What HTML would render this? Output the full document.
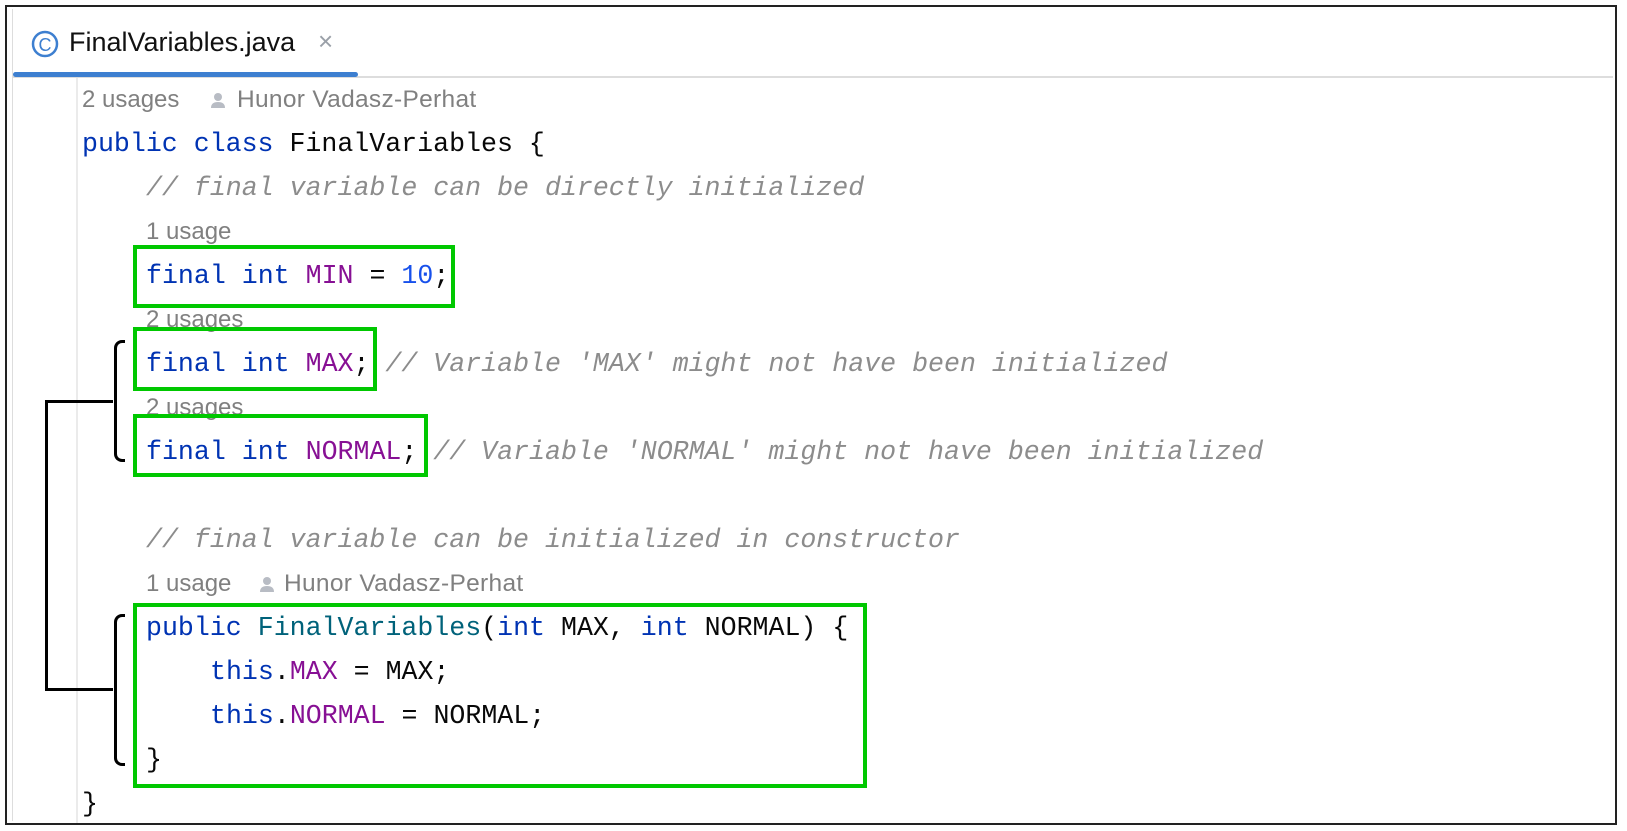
<!DOCTYPE html>
<html><head><meta charset="utf-8"><style>
body{margin:0;width:1627px;height:831px;background:#fff;position:relative;overflow:hidden;font-family:"Liberation Sans",sans-serif}
.a{position:absolute}
.code{position:absolute;font-family:"Liberation Mono",monospace;font-size:26.6px;white-space:pre;line-height:44px;color:#080808}
.u{position:absolute;font-size:24px;color:#808080;white-space:pre;line-height:44px}
.au{font-size:24.5px;letter-spacing:0.3px}
.k{color:#0033b3}.f{color:#871094}.n{color:#1750eb}.c{color:#8c8c8c;font-style:italic}.t{color:#00627a}
.g{position:absolute;border:4px solid #00c800;box-sizing:border-box}
.br{position:absolute;border:3px solid #000;border-right:none;box-sizing:border-box;border-radius:8px 0 0 8px}
</style></head><body>
<div class="a" style="left:5px;top:5px;width:1612px;height:820px;border:2px solid #222;box-sizing:border-box"></div>
<div class="a" style="left:12px;top:9px;width:1px;height:812px;background:#ddd"></div>
<div class="a" style="left:13px;top:76px;width:1600px;height:2px;background:#ddd"></div>
<div class="a" style="left:13px;top:72px;width:345px;height:5px;background:#3d7fd0;border-radius:3px"></div>
<div class="a" style="left:76px;top:78px;width:2px;height:745px;background:#ebebeb"></div>
<svg class="a" style="left:30px;top:29px" width="30" height="30"><circle cx="15" cy="15" r="12" fill="none" stroke="#3d7fd0" stroke-width="2.5"/><text x="15" y="22" font-size="18" text-anchor="middle" fill="#3d7fd0" font-family="Liberation Sans">C</text></svg>
<div class="a" style="left:69px;top:27px;font-size:27px;color:#111">FinalVariables.java</div>
<div class="a" style="left:318px;top:26px;font-size:26px;color:#9aa0a8">×</div>

<div class="u" style="left:82px;top:78px">2 usages</div>
<svg class="a" style="left:211px;top:92px" width="14" height="16"><circle cx="7" cy="5" r="4" fill="#b8bcc4"/><path d="M0 16 Q0 10 7 10 Q14 10 14 16Z" fill="#b8bcc4"/></svg>
<div class="u au" style="left:237px;top:78px">Hunor Vadasz-Perhat</div>
<div class="code" style="left:82px;top:122px"><span class="k">public class</span> FinalVariables {</div>
<div class="code c" style="left:146px;top:166px">// final variable can be directly initialized</div>
<div class="u" style="left:146px;top:210px">1 usage</div>
<div class="code" style="left:146px;top:254px"><span class="k">final int</span> <span class="f">MIN</span> = <span class="n">10</span>;</div>
<div class="u" style="left:146px;top:298px">2 usages</div>
<div class="code" style="left:146px;top:342px"><span class="k">final int</span> <span class="f">MAX</span>; <span class="c">// Variable 'MAX' might not have been initialized</span></div>
<div class="u" style="left:146px;top:386px">2 usages</div>
<div class="code" style="left:146px;top:430px"><span class="k">final int</span> <span class="f">NORMAL</span>; <span class="c">// Variable 'NORMAL' might not have been initialized</span></div>
<div class="code c" style="left:146px;top:518px">// final variable can be initialized in constructor</div>
<div class="u" style="left:146px;top:562px">1 usage</div>
<svg class="a" style="left:260px;top:576px" width="14" height="16"><circle cx="7" cy="5" r="4" fill="#b8bcc4"/><path d="M0 16 Q0 10 7 10 Q14 10 14 16Z" fill="#b8bcc4"/></svg>
<div class="u au" style="left:284px;top:562px">Hunor Vadasz-Perhat</div>
<div class="code" style="left:146px;top:606px"><span class="k">public</span> <span class="t">FinalVariables</span>(<span class="k">int</span> MAX, <span class="k">int</span> NORMAL) {</div>
<div class="code" style="left:210px;top:650px"><span class="k">this</span>.<span class="f">MAX</span> = MAX;</div>
<div class="code" style="left:210px;top:694px"><span class="k">this</span>.<span class="f">NORMAL</span> = NORMAL;</div>
<div class="code" style="left:146px;top:738px">}</div>
<div class="code" style="left:82px;top:782px">}</div>

<div class="g" style="left:133px;top:245px;width:322px;height:63px"></div>
<div class="g" style="left:133px;top:327px;width:244px;height:64px"></div>
<div class="g" style="left:133px;top:414px;width:295px;height:63px"></div>
<div class="g" style="left:133px;top:603px;width:734px;height:185px"></div>

<div class="br" style="left:114px;top:340px;width:11px;height:122px"></div>
<div class="br" style="left:114px;top:614px;width:11px;height:152px"></div>
<div class="a" style="left:45px;top:400px;width:3px;height:291px;background:#000"></div>
<div class="a" style="left:45px;top:400px;width:68px;height:3px;background:#000"></div>
<div class="a" style="left:45px;top:688px;width:68px;height:3px;background:#000"></div>
</body></html>
